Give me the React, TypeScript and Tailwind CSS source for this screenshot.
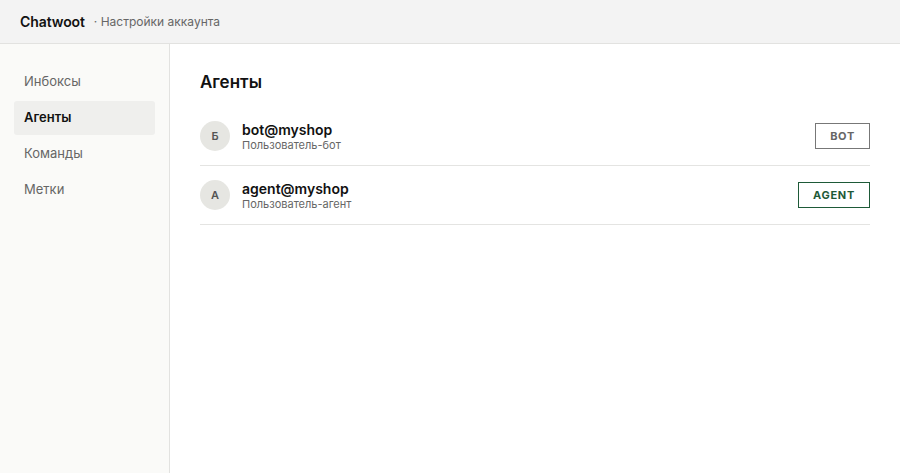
const navItems = ["Инбоксы", "Агенты", "Команды", "Метки"];

const agents = [
	{ initial: "Б", email: "bot@myshop", role: "Пользователь-бот", badge: "BOT", tone: "gray" },
	{ initial: "A", email: "agent@myshop", role: "Пользователь-агент", badge: "AGENT", tone: "green" },
];

export default function App() {
	return (
		<div
			className="flex h-[473px] w-[900px] flex-col bg-white text-[#111]"
			style={{ fontFamily: "Inter, 'Noto Sans', sans-serif" }}
		>
			{/* Header */}
			<header className="flex h-[44px] shrink-0 items-center border-b border-[#e2e2e0] bg-[#f3f3f3] px-5">
				<span className="text-[14px] font-semibold tracking-[-0.1px]">Chatwoot</span>
				<span className="ml-[9px] text-[12px] text-[#666]">· Настройки аккаунта</span>
			</header>

			<div className="flex flex-1">
				{/* Sidebar */}
				<aside className="w-[170px] shrink-0 border-r border-[#e2e2e0] bg-[#fafaf8] px-[14px] pt-[21px]">
					<nav className="flex flex-col gap-[2px]">
						{navItems.map((item) => (
							<div
								key={item}
								className={
									item === "Агенты"
										? "flex h-[34px] items-center rounded-[3px] bg-[#efefed] px-[10px] text-[13px] font-semibold text-[#111]"
										: "flex h-[34px] items-center px-[10px] text-[13px] text-[#666]"
								}
							>
								{item}
							</div>
						))}
					</nav>
				</aside>

				{/* Main */}
				<main className="flex-1 px-[30px] pt-[26px]">
					<h1 className="mb-[13px] text-[17px] font-semibold leading-[24px]">Агенты</h1>
					<div className="flex flex-col">
						{agents.map((a) => (
							<div key={a.email} className="flex h-[59px] items-center border-b border-[#e4e4e2]">
								<div className="flex h-[30px] w-[30px] items-center justify-center rounded-full bg-[#e6e6e2] text-[11px] font-semibold text-[#555]">
									{a.initial}
								</div>
								<div className="ml-[12px] flex flex-1 flex-col">
									<span className="text-[14px] font-semibold leading-[17px]">{a.email}</span>
									<span className="text-[11px] leading-[14px] text-[#666]">{a.role}</span>
								</div>
								<span
									className={
										a.tone === "green"
											? "flex h-[26px] items-center border border-[#1e5a38] px-[14px] text-[11px] font-bold tracking-[0.7px] text-[#1e5a38]"
											: "flex h-[26px] items-center border border-[#777] px-[14px] text-[11px] font-bold tracking-[0.7px] text-[#666]"
									}
								>
									{a.badge}
								</span>
							</div>
						))}
					</div>
				</main>
			</div>
		</div>
	);
}
